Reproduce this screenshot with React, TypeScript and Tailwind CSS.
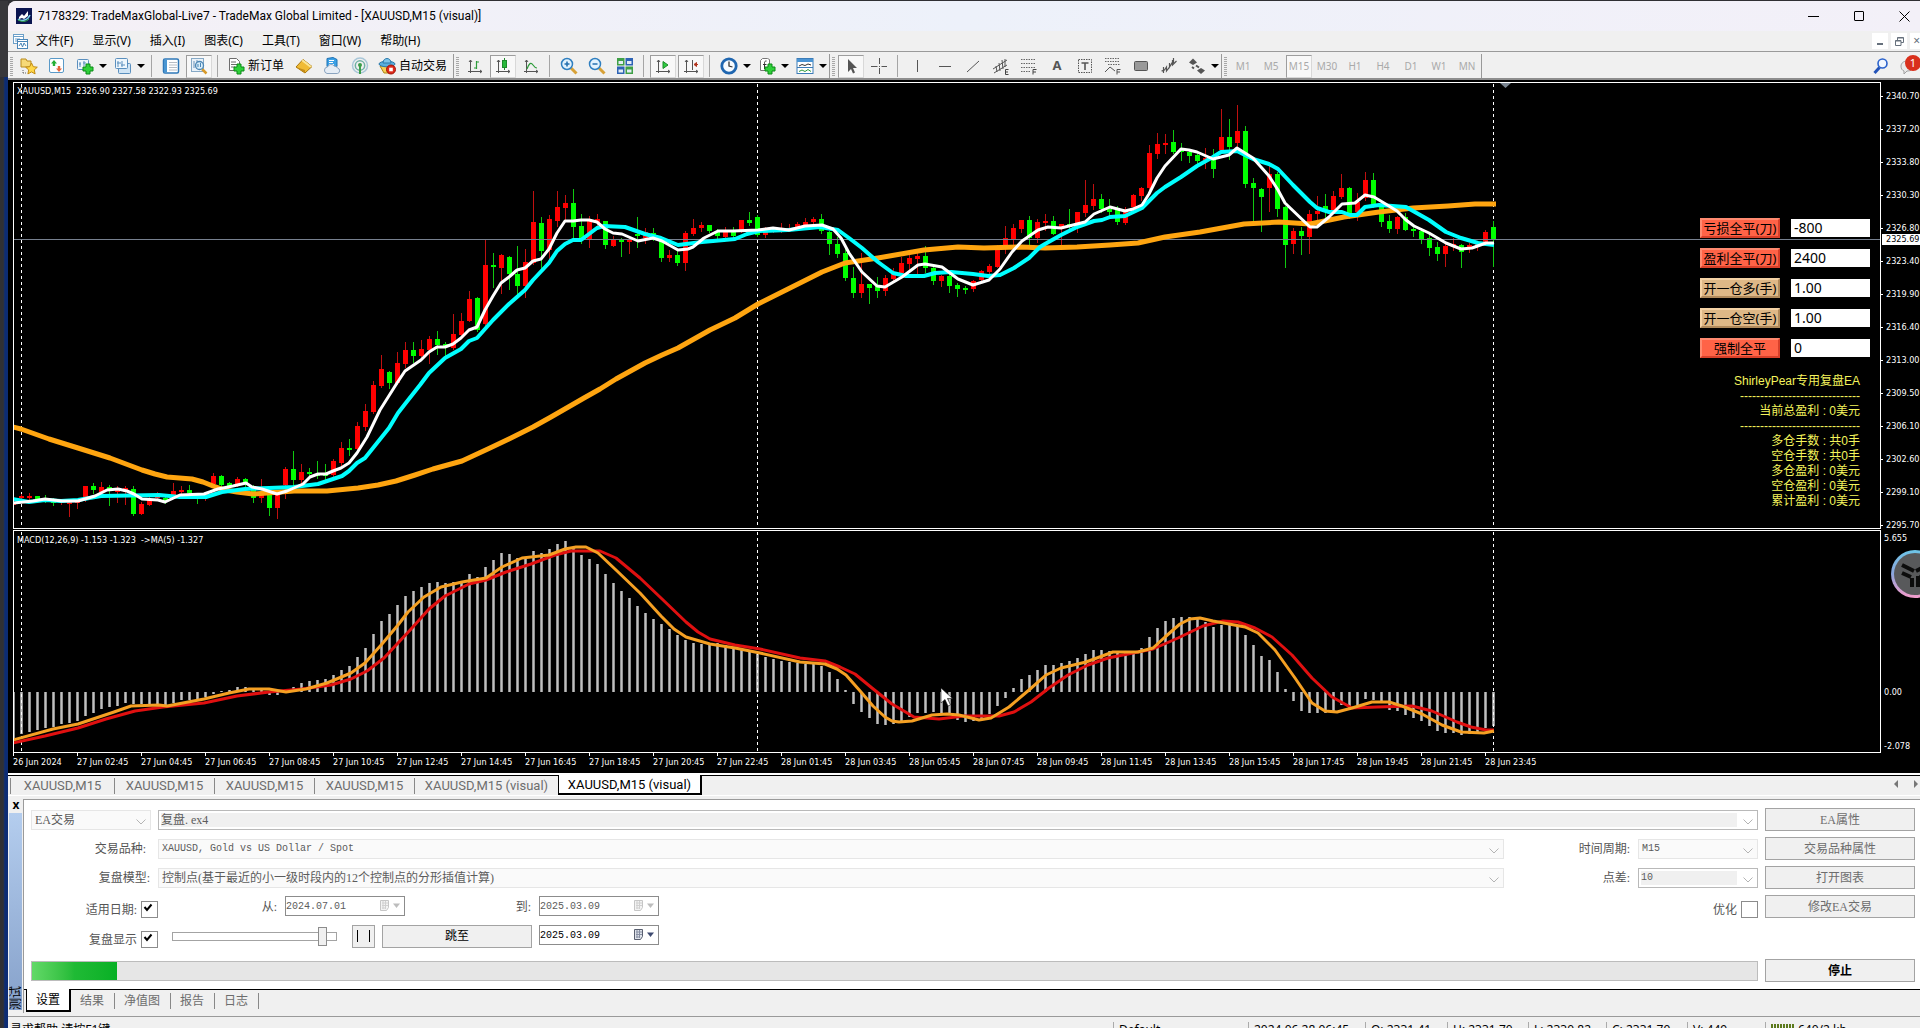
import type { ReactNode } from "react";
import clsx from "clsx";

const UI = "font-['Noto_Sans','Noto_Sans_CJK_SC',sans-serif]";
const SONG = "font-['Liberation_Serif','Noto_Sans_CJK_SC',serif]";
const MONO = "font-['Liberation_Mono','Noto_Sans_CJK_SC',monospace]";
const SMALL = "font-['DejaVu_Sans_Condensed','Noto_Sans',sans-serif]";

// first bar x, distance between bars
const X0 = 13;
const STEP = 8;

type Candle = [high: number, top: number, bottom: number, low: number, up: 0 | 1];

const CANDLES: Candle[] = [
  [501, 502, 505, 510, 1], [494, 496, 498, 499, 1], [493, 496, 497, 499, 1], [496, 496, 499, 500, 0],
  [495, 498, 500, 502, 0], [498, 500, 503, 505, 0], [499, 500, 502, 504, 1], [499, 502, 504, 516, 1],
  [500, 501, 503, 508, 1], [486, 486, 500, 501, 1], [483, 486, 490, 493, 0], [482, 487, 492, 495, 1],
  [485, 487, 491, 505, 0], [486, 488, 492, 502, 1], [486, 488, 492, 504, 1], [486, 489, 514, 515, 0],
  [502, 504, 514, 514, 1], [497, 500, 505, 505, 1], [492, 495, 498, 500, 1], [496, 498, 501, 503, 0],
  [483, 491, 495, 497, 1], [486, 490, 492, 495, 1], [485, 490, 493, 495, 0], [493, 495, 498, 503, 0],
  [492, 494, 498, 500, 1], [473, 476, 484, 486, 1], [475, 476, 485, 487, 0], [482, 483, 486, 487, 0],
  [477, 479, 484, 486, 1], [478, 479, 484, 486, 0], [485, 486, 498, 502, 0], [479, 495, 498, 502, 1],
  [495, 495, 508, 515, 0], [493, 495, 508, 518, 1], [467, 469, 485, 498, 1], [451, 469, 480, 488, 0],
  [464, 472, 480, 484, 1], [468, 472, 473, 477, 0], [461, 474, 476, 478, 0], [464, 474, 476, 480, 0],
  [459, 461, 475, 477, 1], [442, 448, 463, 465, 1], [439, 448, 450, 455, 0], [422, 426, 449, 450, 1],
  [404, 411, 427, 430, 1], [381, 385, 412, 413, 1], [355, 369, 386, 387, 1], [371, 372, 383, 388, 0],
  [352, 363, 383, 384, 1], [342, 350, 364, 367, 1], [342, 350, 356, 362, 0], [340, 349, 356, 357, 1],
  [336, 339, 350, 363, 1], [331, 339, 345, 354, 0], [342, 344, 345, 357, 0], [314, 334, 348, 349, 1],
  [313, 321, 335, 335, 1], [291, 299, 321, 321, 1], [297, 298, 330, 331, 0], [240, 265, 324, 325, 1],
  [253, 265, 267, 287, 0], [254, 255, 268, 293, 1], [256, 257, 274, 289, 0], [246, 274, 286, 294, 0],
  [249, 262, 286, 297, 1], [191, 222, 263, 264, 1], [217, 223, 251, 268, 0], [215, 219, 250, 259, 1],
  [191, 207, 221, 226, 1], [195, 203, 208, 220, 1], [189, 203, 227, 240, 0], [214, 226, 238, 243, 0],
  [216, 221, 240, 247, 1], [214, 219, 223, 227, 1], [221, 221, 245, 248, 0], [236, 239, 246, 246, 1],
  [238, 239, 242, 256, 0], [238, 239, 242, 253, 1], [217, 234, 236, 247, 0], [228, 232, 238, 243, 1],
  [228, 233, 238, 240, 0], [238, 239, 258, 261, 0], [250, 255, 258, 261, 1], [251, 255, 263, 265, 0],
  [231, 233, 263, 270, 1], [219, 228, 234, 235, 1], [222, 225, 228, 231, 1], [225, 225, 231, 232, 0],
  [229, 231, 236, 238, 0], [227, 232, 237, 240, 1], [227, 232, 236, 238, 0], [220, 220, 230, 232, 1],
  [212, 220, 223, 225, 0], [215, 217, 235, 236, 0], [227, 230, 235, 237, 1], [227, 229, 231, 232, 1],
  [223, 228, 230, 232, 1], [224, 228, 230, 231, 1], [222, 224, 227, 229, 1], [218, 222, 225, 227, 1],
  [217, 219, 222, 224, 1], [214, 219, 231, 233, 0], [231, 232, 244, 254, 0], [237, 244, 254, 257, 0],
  [247, 253, 278, 280, 0], [267, 278, 293, 297, 0], [253, 284, 293, 297, 1], [284, 284, 288, 303, 0],
  [277, 286, 291, 297, 0], [275, 278, 291, 295, 1], [268, 274, 279, 280, 1], [257, 263, 273, 274, 1],
  [253, 258, 264, 270, 1], [252, 256, 259, 273, 1], [246, 256, 268, 272, 0], [266, 268, 281, 284, 0],
  [275, 276, 281, 286, 1], [274, 276, 286, 292, 0], [283, 285, 289, 296, 0], [286, 288, 289, 293, 0],
  [280, 281, 289, 291, 1], [270, 271, 280, 282, 1], [264, 266, 272, 273, 1], [245, 247, 267, 267, 1],
  [226, 238, 247, 253, 1], [224, 228, 240, 244, 1], [220, 220, 229, 232, 1], [216, 220, 238, 244, 0],
  [219, 222, 238, 242, 1], [214, 221, 223, 230, 1], [216, 221, 234, 234, 0], [224, 224, 227, 246, 1],
  [209, 224, 227, 228, 0], [212, 212, 224, 232, 1], [180, 205, 213, 216, 1], [184, 199, 206, 209, 1],
  [194, 199, 209, 212, 0], [199, 209, 212, 215, 0], [206, 210, 222, 224, 0], [207, 209, 223, 224, 1],
  [194, 195, 207, 209, 1], [187, 188, 196, 200, 1], [145, 153, 188, 190, 1], [133, 144, 154, 158, 1],
  [134, 143, 145, 153, 1], [130, 142, 152, 153, 0], [143, 149, 152, 160, 0], [151, 152, 156, 162, 0],
  [153, 155, 161, 163, 0], [148, 158, 160, 168, 1], [149, 159, 169, 177, 0], [109, 137, 150, 151, 1],
  [119, 137, 147, 159, 0], [105, 131, 143, 147, 1], [126, 131, 184, 187, 0], [178, 183, 188, 222, 0],
  [188, 189, 197, 231, 0], [166, 174, 188, 211, 1], [172, 174, 209, 216, 0], [206, 207, 245, 267, 0],
  [228, 231, 244, 253, 1], [227, 231, 236, 254, 0], [210, 214, 237, 253, 1], [196, 211, 214, 220, 1],
  [194, 206, 212, 217, 0], [191, 196, 212, 212, 1], [174, 188, 197, 198, 1], [187, 188, 215, 218, 0],
  [193, 202, 212, 220, 1], [172, 180, 198, 200, 1], [173, 180, 204, 207, 0], [205, 207, 222, 226, 0],
  [215, 221, 229, 232, 0], [216, 217, 229, 233, 1], [213, 217, 230, 230, 0], [225, 229, 231, 236, 0],
  [229, 231, 240, 243, 0], [233, 238, 248, 255, 0], [242, 247, 254, 260, 0], [243, 246, 254, 266, 1],
  [238, 244, 247, 250, 1], [244, 245, 252, 267, 0], [243, 245, 247, 252, 1], [242, 244, 246, 250, 1],
  [230, 232, 242, 245, 1], [221, 227, 240, 266, 0],
];

const MACD = [
  741, 734, 732, 730, 728, 727, 724, 723, 721, 716, 713, 709, 707, 706, 703, 704, 704, 705, 706, 706,
  703, 700, 700, 700, 697, 694, 691, 690, 687, 687, 690, 690, 695, 695, 690, 687, 683, 681, 680, 679,
  675, 670, 666, 657, 648, 634, 621, 614, 605, 596, 591, 587, 583, 582, 583, 582, 581, 574, 577, 567,
  560, 553, 554, 558, 557, 551, 553, 549, 544, 541, 548, 555, 559, 564, 574, 583, 591, 598, 606, 613,
  619, 624, 629, 635, 640, 643, 644, 644, 643, 645, 647, 648, 651, 654, 657, 659, 661, 662, 663, 664,
  664, 666, 672, 679, 690, 704, 712, 718, 724, 725, 724, 721, 717, 713, 713, 712, 713, 714, 720, 722,
  721, 720, 714, 706, 698, 688, 679, 675, 670, 665, 665, 663, 661, 658, 654, 650, 650, 651, 651, 652,
  652, 648, 637, 628, 621, 618, 617, 617, 617, 622, 627, 625, 624, 626, 635, 645, 656, 660, 672, 689,
  701, 711, 713, 713, 713, 712, 705, 708, 705, 699, 700, 703, 710, 711, 715, 718, 721, 726, 731, 733,
  733, 735, 734, 733, 728, 726,
];
const MACD_ZERO = 692;

const MA_FAST =
  "13,503 33,501 45,499 62,501 78,501 95,496 107,490 118,489 127,491 134,494 142,499 158,500 165,502 180,495 204,494 218,489 233,486 246,483 252,487 262,489 277,494 287,491 303,484 310,477 318,474 326,474 333,471 341,468 349,463 357,453 367,437 380,410 397,383 405,371 421,360 429,352 437,347 445,347 453,344 461,338 469,330 477,327 485,310 493,296 501,283 509,277 517,270 525,268 533,261 541,259 549,249 557,233 565,221 573,221 581,220 589,220 597,222 605,229 613,233 622,234 638,241 653,238 662,241 678,250 688,249 693,247 704,238 718,231 733,231 758,230 773,228 789,230 805,226 822,225 833,229 841,238 849,253 862,272 877,286 885,287 902,277 918,265 925,264 942,267 958,279 973,285 989,280 1000,269 1012,252 1022,241 1038,230 1048,227 1061,228 1085,222 1094,214 1110,207 1125,211 1133,209 1142,205 1149,194 1157,178 1165,166 1181,149 1189,150 1197,152 1213,159 1229,155 1237,148 1253,158 1269,176 1278,190 1285,203 1310,227 1317,227 1329,217 1342,204 1355,203 1365,195 1374,197 1389,206 1397,211 1406,220 1414,226 1429,233 1446,243 1461,249 1472,248 1486,243 1494,243";
const MA_MID =
  "13,499 29,502 45,500 61,501 78,500 101,496 159,495 180,497 206,497 222,492 245,489 269,488 294,487 318,484 333,479 342,476 349,471 357,463 365,458 373,448 389,428 398,413 405,404 420,385 429,373 445,358 461,349 469,341 477,338 493,320 509,304 517,297 525,290 533,280 549,263 557,251 565,244 573,240 581,240 597,228 604,226 625,227 645,234 661,238 678,245 702,242 735,239 747,234 759,231 788,230 820,227 838,230 849,238 862,248 878,262 893,273 906,276 924,276 935,273 951,272 973,274 988,276 1000,275 1014,268 1029,258 1040,247 1045,244 1061,235 1077,227 1094,221 1102,220 1110,217 1125,216 1142,208 1157,193 1165,187 1181,177 1197,166 1213,157 1221,152 1237,151 1253,159 1269,164 1278,169 1293,185 1310,202 1317,208 1329,212 1342,212 1350,215 1357,215 1365,207 1379,205 1406,207 1429,220 1446,232 1461,238 1478,243 1494,245";
const MA_SLOW =
  "13,427 21,429 49,439 78,448 110,458 142,470 155,474 167,477 192,479 203,482 213,486 225,490 237,492 253,494 294,491 327,491 358,488 378,485 396,481 415,475 433,469 462,461 490,448 511,438 533,427 551,417 584,398 600,389 616,379 645,363 662,355 678,348 710,330 735,318 758,304 788,289 822,272 845,263 878,258 924,250 958,247 984,248 1021,247 1045,248 1077,247 1110,245 1138,243 1165,237 1200,232 1244,224 1279,222 1310,224 1344,217 1379,212 1413,208 1448,206 1475,204 1496,204";
const SIGNAL_FAST =
  "13,740 53,729 78,724 96,718 114,712 131,706 159,705 167,706 204,699 229,693 249,689 269,689 286,692 306,689 327,683 351,673 365,663 382,644 398,625 408,612 424,597 441,587 462,582 486,578 502,567 522,558 549,555 565,549 576,547 586,547 598,553 616,570 640,593 661,616 674,629 686,637 710,644 735,648 760,653 800,662 825,664 837,669 846,675 861,692 873,706 885,717 892,721 899,722 912,721 932,715 947,714 959,715 979,720 991,718 1009,707 1029,690 1046,675 1061,668 1086,662 1113,652 1138,652 1153,648 1165,637 1180,624 1190,619 1200,618 1213,621 1245,627 1258,633 1275,650 1295,678 1312,703 1325,711 1337,712 1352,708 1372,702 1389,702 1402,706 1422,714 1442,725 1461,732 1484,733 1494,731";
const SIGNAL_SLOW =
  "13,743 45,736 78,728 106,719 135,711 163,707 204,703 237,696 269,692 302,689 331,685 351,679 367,671 384,658 398,643 412,628 429,609 445,596 469,584 486,580 506,572 531,564 555,555 571,551 600,551 616,558 640,578 661,598 686,622 698,632 710,639 735,645 760,649 800,658 825,661 840,667 855,674 872,688 892,704 914,717 939,719 964,716 999,716 1014,712 1031,702 1049,688 1068,675 1088,665 1108,658 1153,649 1178,638 1203,626 1223,621 1238,622 1255,628 1272,637 1292,655 1312,678 1332,697 1352,708 1377,707 1412,706 1432,711 1457,722 1471,727 1486,730 1494,730";

const PRICES = [
  "2340.70", "2337.20", "2333.80", "2330.30", "2326.80", "2323.40", "2319.90",
  "2316.40", "2313.00", "2309.50", "2306.10", "2302.60", "2299.10", "2295.70",
];

const TIMES = [
  "26 Jun 2024", "27 Jun 02:45", "27 Jun 04:45", "27 Jun 06:45", "27 Jun 08:45", "27 Jun 10:45",
  "27 Jun 12:45", "27 Jun 14:45", "27 Jun 16:45", "27 Jun 18:45", "27 Jun 20:45", "27 Jun 22:45",
  "28 Jun 01:45", "28 Jun 03:45", "28 Jun 05:45", "28 Jun 07:45", "28 Jun 09:45", "28 Jun 11:45",
  "28 Jun 13:45", "28 Jun 15:45", "28 Jun 17:45", "28 Jun 19:45", "28 Jun 21:45", "28 Jun 23:45",
];

/* ---------- icons ---------- */

function Svg({ children, size = 18 }: { children: ReactNode; size?: number }) {
  return (
    <svg width={size} height={size} viewBox="0 0 18 18" fill="none" className="shrink-0">
      {children}
    </svg>
  );
}

const Plus = () => (
  <path d="M10 7h4v3h3v4h-3v3h-4v-3H7v-4h3z" fill="#2fd03a" stroke="#0a8a17" />
);

const Axes = () => (
  <path d="M4.500 3v13M2 14.500h14M3 5l1.500-2L6 5M14 13l2 1.500-2 1.500" stroke="#555" />
);

const FavIcon = () => (
  <Svg>
    <path d="M1 2h5l1 2h4v6H1z" fill="#f6d978" stroke="#b98b1c" />
    <path d="M3 13v3M3 16h3" stroke="#666" strokeDasharray="1 1" />
    <path d="M11.500 6l1.800 3.700 4 .5-3 2.700.8 4-3.600-2-3.600 2 .8-4-3-2.700 4-.5z" fill="#ffd84a" stroke="#c08a10" />
  </Svg>
);
const MarketIcon = () => (
  <Svg>
    <rect x="1.500" y="1.500" width="14" height="14" rx="1.500" fill="#fff" stroke="#5a9ac8" />
    <path d="M6 3l3 3.500H7.200V9H4.800V6.500H3z" fill="#25b035" />
    <path d="M11 15l-3-3.500h1.800V9h2.400v2.500H14z" fill="#e8663a" />
  </Svg>
);
const NewChartIcon = () => (
  <Svg>
    <rect x="1.500" y="2.500" width="11" height="10" rx="1" fill="#eef6fc" stroke="#5a8fbe" />
    <path d="M4 5v5M8 4v5M3 7h2M7 6h3" stroke="#5a8fbe" />
    <Plus />
  </Svg>
);
const ProfilesIcon = () => (
  <Svg>
    <rect x="4.500" y="6.500" width="12" height="10" rx="1" fill="#cfe4f5" stroke="#5a8fbe" />
    <rect x="1.500" y="1.500" width="12" height="10" rx="1" fill="#eef6fc" stroke="#5a8fbe" />
    <path d="M4 4v6M8 4v6M3 6h4M7 8h4" stroke="#5a8fbe" />
  </Svg>
);
const WatchIcon = () => (
  <Svg>
    <rect x="1.500" y="2" width="15" height="14" rx="1.500" fill="#fff" stroke="#2f78b8" strokeWidth="1.500" />
    <path d="M2 2.500h3v13H2z" fill="#4a96d2" />
    <path d="M7 5.500h8M7 8h8M7 10.500h8M7 13h8" stroke="#b6bcc4" />
  </Svg>
);
const TesterIcon = () => (
  <Svg>
    <rect x="1.500" y="1.500" width="12" height="13" fill="#eaf2f9" stroke="#86a9c6" />
    <path d="M4 4v7M7 3v8" stroke="#6a93b8" />
    <path d="M12 12l4.500 4.500" stroke="#d79a2b" strokeWidth="2.500" />
    <circle cx="9.500" cy="8.500" r="4" fill="#d5ecfb" fillOpacity=".8" stroke="#4d87b5" strokeWidth="1.300" />
    <path d="M8 7v3M10.500 6v4" stroke="#4d87b5" />
  </Svg>
);
const OrderIcon = () => (
  <Svg>
    <path d="M2.500 1.500h7l3 3v9h-10z" fill="#fff" stroke="#6d6d6d" />
    <path d="M4 5h5M4 7.500h6M4 10h4" stroke="#6d6d6d" />
    <Plus />
  </Svg>
);
const GoldIcon = () => (
  <Svg>
    <path d="M1 10l7-7.500 9 7L10 16z" fill="#f0bb35" stroke="#a8770f" />
    <path d="M8 2.500l9 7-2 1-8.500-6.500z" fill="#fbe596" />
    <path d="M1 10l9 3v3z" fill="#c48c18" />
  </Svg>
);
const CloudIcon = () => (
  <Svg>
    <path d="M4 1.500l6-1 4 2v7H4z" fill="#3ba1e6" stroke="#1f72b3" />
    <path d="M6 3.500h5M6 5.500h4M6 7.500h5" stroke="#fff" />
    <path d="M4 16.500a3.300 3.300 0 0 1 .5-6.500 4 4 0 0 1 7-.8 3.200 3.200 0 0 1 3 1.800 2.800 2.800 0 0 1-.3 5.500z" fill="#e6edf5" stroke="#8ba4bf" />
  </Svg>
);
const SignalIcon = () => (
  <Svg>
    <circle cx="9" cy="8.500" r="7.500" stroke="#a9c7d8" strokeWidth="1.500" />
    <circle cx="9" cy="8.500" r="4.700" stroke="#6fb0a4" strokeWidth="1.500" />
    <circle cx="9" cy="8" r="2" fill="#3c9e4a" />
    <path d="M9 8v9" stroke="#3c9e4a" strokeWidth="2" />
  </Svg>
);
const AutoIcon = () => (
  <Svg>
    <path d="M2 9h14l-4 7H6z" fill="#f4cf55" stroke="#ad8417" />
    <ellipse cx="9" cy="7" rx="8" ry="2.800" fill="#58aede" stroke="#2b78a8" />
    <path d="M5 6c0-6 8-6 8 0z" fill="#7cc4ea" stroke="#2b78a8" />
    <circle cx="13" cy="12.500" r="4.500" fill="#dd2a1b" stroke="#a01408" />
    <rect x="11.200" y="10.700" width="3.600" height="3.600" fill="#fff" />
  </Svg>
);
const BarsIcon = () => (
  <Svg>
    <Axes />
    <path d="M10.500 4v8M8 11h2.500M10.500 5H13" stroke="#2d9c3a" strokeWidth="1.200" />
  </Svg>
);
const CandlesIcon = () => (
  <Svg>
    <Axes />
    <path d="M10.500 1v12" stroke="#1d8b2a" />
    <rect x="8.500" y="3.500" width="4" height="7" fill="#27b93b" stroke="#1d8b2a" />
  </Svg>
);
const LineIcon = () => (
  <Svg>
    <Axes />
    <path d="M5 12c2-6 4-7 6-4s3 3 4 3" stroke="#2d9c3a" strokeWidth="1.200" />
  </Svg>
);
const Lens = ({ minus }: { minus?: boolean }) => (
  <Svg>
    <path d="M11 11l5.500 5.500" stroke="#d7a137" strokeWidth="3" />
    <circle cx="7" cy="7" r="5.500" fill="#e2f2fd" stroke="#2f7fc0" strokeWidth="1.500" />
    <path d={minus ? "M4.500 7h5" : "M4.500 7h5M7 4.500v5"} stroke="#2570b0" strokeWidth="1.600" />
  </Svg>
);
const TileIcon = () => (
  <Svg>
    <path d="M1 1h7.500v7.500H1z" fill="#3fa047" />
    <path d="M9.500 1H17v7.500H9.500z" fill="#2d63b5" />
    <path d="M1 9.500h7.500V17H1z" fill="#2d63b5" />
    <path d="M9.500 9.500H17V17H9.500z" fill="#3fa047" />
    <path d="M2.500 4h4.500v3H2.500zM11 4h4.500v3H11zM2.500 12.500h4.500v3H2.500zM11 12.500h4.500v3H11z" fill="#e4edf6" />
  </Svg>
);
const ScrollIcon = () => (
  <Svg>
    <Axes />
    <path d="M9 4.500l5 3.500-5 3.500z" fill="#2ecc40" stroke="#1d8b2a" />
  </Svg>
);
const ShiftIcon = () => (
  <Svg>
    <Axes />
    <path d="M10.500 3v10" stroke="#555" />
    <path d="M16 7.500h-3M12 7.500l2.500-2v4z" stroke="#b3341e" fill="#b3341e" />
  </Svg>
);
const ClockIcon = () => (
  <Svg>
    <circle cx="9" cy="9" r="7.200" fill="#f6fbff" stroke="#1f66b0" strokeWidth="2.800" />
    <path d="M9 4.500V9l3.500 1" stroke="#333" strokeWidth="1.300" />
  </Svg>
);
const IndicatorIcon = () => (
  <Svg>
    <path d="M2.500 3.500v10h9v-11l-2-1h-5z" fill="#fff" stroke="#777" />
    <path d="M8.500 4c-2 0-2 1-2 2.500V12M5 7.500h3.500" stroke="#333" />
    <Plus />
  </Svg>
);
const TemplateIcon = () => (
  <Svg>
    <rect x="1" y="1.500" width="16" height="15" fill="#fff" stroke="#3b7cb8" />
    <path d="M1 2h16v3H1z" fill="#4a94d4" />
    <path d="M3 9l3-1.500 3 1 3-1.500 3 1" stroke="#333" />
    <path d="M1 10.500h16" stroke="#3b7cb8" />
    <path d="M3 14.500l3-1.500 3 1.500 3-2 3 2" stroke="#2d9c3a" />
  </Svg>
);
const PointerIcon = () => (
  <Svg>
    <path d="M6 2v13l3-3 2 4.500 2-1L11 11h4z" fill="#555" />
  </Svg>
);
const CrossIcon = () => (
  <Svg>
    <path d="M9.500 1v6M9.500 11v6M1 9.500h6.500M11.500 9.500H17M9 9.500h1" stroke="#555" />
  </Svg>
);
const VLineIcon = () => <Svg><path d="M9.500 3v12" stroke="#555" /></Svg>;
const HLineIcon = () => <Svg><path d="M3 9.500h12" stroke="#555" /></Svg>;
const TrendIcon = () => <Svg><path d="M3 15L15 4" stroke="#555" /></Svg>;
const ChannelIcon = () => (
  <Svg>
    <path d="M1 12L15 3M2 16L15 8M4 9l1 6M7 6l1 8M10 3l1 9M13 2v8" stroke="#555" />
    <path d="M16.500 12.500h-3v5h3M13.500 15h2.500" stroke="#444" />
  </Svg>
);
const FiboIcon = () => (
  <Svg>
    <path d="M1 2.500h15M1 6.500h15M1 10.500h15M1 14.500h9" stroke="#666" strokeDasharray="1.500 1" />
    <path d="M16.500 12.500h-3.500v5M13 15h3" stroke="#444" />
  </Svg>
);
const LabelIcon = () => (
  <Svg>
    <rect x="2.500" y="2.500" width="13" height="13" stroke="#555" strokeDasharray="1.500 1" />
    <path d="M5.500 6h7M9 6v7" stroke="#555" strokeWidth="1.600" />
  </Svg>
);
const FanIcon = () => (
  <Svg>
    <path d="M1 1.500h15M1 4.500h15M4 7.500h12" stroke="#666" strokeDasharray="1.500 1" />
    <path d="M1 15l5-5 5 4M16.500 12.500h-3.500v5M13 15h3" stroke="#555" />
  </Svg>
);
const RectIcon = () => <Svg><rect x="2.500" y="4.500" width="13" height="9" rx="1" fill="#999" stroke="#555" /></Svg>;
const WavesIcon = () => (
  <Svg>
    <path d="M3.500 10v6M1.500 14l3-1 2-3v4l3-4V6v4l3-5V3v5l4-4M13.500 1v5" stroke="#555" strokeWidth="1.200" />
  </Svg>
);
const ArrowsIcon = () => (
  <Svg>
    <path d="M1 5.500L5 1.500l4 4-4 2.500z" fill="#555" />
    <path d="M4 10l2 1.500M8 8.500l3 2" stroke="#555" strokeWidth="2" />
    <path d="M9 13.500l4-2.500 4 2.500-4 3.500z" fill="#555" />
  </Svg>
);
const SearchIcon = () => (
  <Svg>
    <path d="M7.500 10.500L2.500 16" stroke="#2353b8" strokeWidth="3" />
    <circle cx="10.500" cy="6.500" r="4.500" fill="#f2f7ff" stroke="#2b62cc" strokeWidth="1.600" />
  </Svg>
);

const Calendar = ({ dim }: { dim?: boolean }) => (
  <svg width="22" height="13" viewBox="0 0 22 13" fill="none">
    <path d="M1.500 1.500h8v7l-2 3h-6z" fill={dim ? "#f3f3f3" : "#dfe3ea"} stroke={dim ? "#c6c6c6" : "#5a6070"} />
    <path d="M3 4h6M3 6.500h6M3 9h4M4 2v8M6.500 2v8" stroke={dim ? "#d0d0d0" : "#8890a4"} />
    <path d="M14 4.500h7L17.500 9z" fill={dim ? "#bdbdbd" : "#3e4a70"} />
  </svg>
);

const Chevron = () => (
  <svg width="10" height="6" viewBox="0 0 10 6" fill="none" className="pointer-events-none absolute right-1 top-2">
    <path d="M.5.500L5 5 9.500.500" stroke="#b4b4b4" />
  </svg>
);

/* ---------- toolbar ---------- */

interface ToolProps {
  name: string;
  icon?: ReactNode;
  text?: string;
  pressed?: boolean;
  menu?: boolean;
}

function Tool({ name, icon, text, pressed, menu }: ToolProps) {
  return (
    <button type="button" aria-label={name} className="flex h-[24px] shrink-0 items-center">
      <span
        className={clsx(
          "flex h-[23px] items-center justify-center",
          text ? "w-[25px]" : "mx-px w-[26px]",
          pressed && "border border-[#d8d8d8] border-l-[#9d9d9d] border-t-[#9d9d9d] bg-[#f8f8f8]",
        )}
      >
        {icon}
      </span>
      {text && <span className="mr-1.5 text-[12px] leading-4 text-black">{text}</span>}
      {menu && <span className="mr-0.5 size-0 border-x-4 border-t-4 border-x-transparent border-t-black" />}
    </button>
  );
}

const Sep = () => <span className="mr-[5px] ml-1 h-[22px] w-px shrink-0 bg-[#a5a5a5]" />;
const End = () => <span className="h-[24px] w-px shrink-0 bg-[#999]" />;
const Grip = () => (
  <span className="mx-0.5 h-[19px] w-[3px] shrink-0 bg-[repeating-linear-gradient(#a8a8a8_0_1px,#f0f0f0_1px_2px)]" />
);

const FRAMES = ["M1", "M5", "M15", "M30", "H1", "H4", "D1", "W1", "MN"];

function Toolbar() {
  return (
    <div className="flex h-[28px] items-center border-b-2 border-[#8e8e8e] bg-[#f0f0f0] pt-0.5">
      <Grip />
      <Tool name="收藏" icon={<FavIcon />} />
      <Tool name="市场报价" icon={<MarketIcon />} />
      <Tool name="新图表" icon={<NewChartIcon />} menu />
      <Tool name="配置文件" icon={<ProfilesIcon />} menu />
      <Sep />
      <Tool name="数据窗口" icon={<WatchIcon />} />
      <Tool name="策略测试" icon={<TesterIcon />} pressed />
      <Sep />
      <Tool name="新订单" icon={<OrderIcon />} text="新订单" />
      <Tool name="MetaEditor" icon={<GoldIcon />} />
      <Tool name="云" icon={<CloudIcon />} />
      <Tool name="信号" icon={<SignalIcon />} />
      <Tool name="自动交易" icon={<AutoIcon />} text="自动交易" />
      <End />
      <Grip />
      <Tool name="柱状图" icon={<BarsIcon />} />
      <Tool name="阴阳烛" icon={<CandlesIcon />} pressed />
      <Tool name="折线图" icon={<LineIcon />} />
      <Sep />
      <Tool name="放大" icon={<Lens />} />
      <Tool name="缩小" icon={<Lens minus />} />
      <Tool name="平铺" icon={<TileIcon />} />
      <Sep />
      <Tool name="自动滚动" icon={<ScrollIcon />} pressed />
      <Tool name="图表平移" icon={<ShiftIcon />} pressed />
      <Sep />
      <Tool name="周期" icon={<ClockIcon />} menu />
      <Tool name="指标" icon={<IndicatorIcon />} menu />
      <Tool name="模板" icon={<TemplateIcon />} menu />
      <End />
      <Grip />
      <Tool name="光标" icon={<PointerIcon />} pressed />
      <Tool name="十字准线" icon={<CrossIcon />} />
      <Sep />
      <Tool name="垂直线" icon={<VLineIcon />} />
      <Tool name="水平线" icon={<HLineIcon />} />
      <Tool name="趋势线" icon={<TrendIcon />} />
      <Tool name="通道" icon={<ChannelIcon />} />
      <Tool name="斐波那契" icon={<FiboIcon />} />
      <Tool name="文字" icon={<span className="text-[13px] font-bold text-[#555]">A</span>} />
      <Tool name="标签" icon={<LabelIcon />} />
      <Tool name="扇形" icon={<FanIcon />} />
      <Tool name="矩形" icon={<RectIcon />} />
      <Tool name="波浪" icon={<WavesIcon />} />
      <Tool name="箭头" icon={<ArrowsIcon />} menu />
      <End />
      <Grip />
      {FRAMES.map((f) => (
        <Tool
          key={f}
          name={f}
          pressed={f === "M15"}
          icon={<span className="text-[10px] text-[#a9a9a9]">{f}</span>}
        />
      ))}
      <End />
      <div className="relative ml-auto flex items-center gap-2">
        <button type="button" aria-label="搜索"><SearchIcon /></button>
        <button type="button" aria-label="通知" className="w-[22px]">
          <svg width="18" height="18" viewBox="0 0 18 18" fill="none">
            <path d="M3 9c0-3 3-5 6-5h5v8c-1 2-4 2-5 2l-3 3v-3c-2-1-3-2-3-5z" fill="#e9e9e9" stroke="#a0a0a0" />
          </svg>
        </button>
        <span className="absolute -top-0.5 left-[33px] flex size-4 items-center justify-center rounded-full bg-[#d9301c] text-[11px] leading-4 text-white">
          1
        </span>
      </div>
    </div>
  );
}

/* ---------- chart ---------- */

function DayLines({ y1, y2 }: { y1: number; y2: number }) {
  return (
    <>
      {[1, 93, 185].map((i) => (
        <line
          key={i}
          x1={X0 + STEP * i + 0.5}
          x2={X0 + STEP * i + 0.5}
          y1={y1}
          y2={y2}
          stroke="#fff"
          strokeDasharray="3 3"
        />
      ))}
    </>
  );
}

const line = { fill: "none", strokeLinejoin: "round" as const };

function PricePlot() {
  return (
    <svg className="block h-full w-full">
      <g transform="translate(-14 -83)">
        <DayLines y1={84} y2={528} />
        <g shapeRendering="crispEdges">
          {CANDLES.map(([high, top, bottom, low, up], i) => {
            const x = X0 + STEP * i;
            return (
              <g key={i} fill={up ? "#f00" : "#0f0"}>
                <rect x={x} y={high} width={1} height={low - high + 1} fill={up ? "#c01010" : "#10c810"} />
                <rect x={x - 2} y={top} width={5} height={Math.max(bottom - top, 2)} />
              </g>
            );
          })}
        </g>
        <rect x={14} y={239} width={4000} height={1} fill="#77808f" />
        <polyline points={MA_SLOW} stroke="#ffa510" strokeWidth={5} {...line} />
        <polyline points={MA_MID} stroke="#0ff" strokeWidth={4} {...line} />
        <polyline points={MA_FAST} stroke="#fff" strokeWidth={3} {...line} />
        <path d="M1500 83h11l-5.500 5z" fill="#7a8591" />
      </g>
    </svg>
  );
}

function MacdPlot() {
  return (
    <svg className="block h-full w-full">
      <g transform="translate(-14 -531)">
        <g fill="#c0c0c0">
          {MACD.map((y, i) => (
            <rect
              key={i}
              x={X0 + STEP * i - 0.75}
              y={Math.min(y, MACD_ZERO)}
              width={2.5}
              height={Math.max(Math.abs(y - MACD_ZERO), 1)}
            />
          ))}
        </g>
        <DayLines y1={532} y2={752} />
        <polyline points={SIGNAL_SLOW} stroke="#e01010" strokeWidth={3} {...line} />
        <polyline points={SIGNAL_FAST} stroke="#f5a023" strokeWidth={3} {...line} />
        <path d="M941 688v15l4-3.500 3 6.500 2.500-1-3-6.500h5z" fill="#fff" stroke="#111" strokeWidth=".6" />
      </g>
    </svg>
  );
}

const ORDERS = [
  { id: "loss", label: "亏损全平(刀)", value: "-800", red: true },
  { id: "profit", label: "盈利全平(刀)", value: "2400", red: true },
  { id: "buy", label: "开一仓多(手)", value: "1.00", red: false },
  { id: "sell", label: "开一仓空(手)", value: "1.00", red: false },
  { id: "close", label: "强制全平", value: "0", red: true },
];

const INFO = [
  "ShirleyPear专用复盘EA",
  "------------------------------",
  "当前总盈利 : 0美元",
  "------------------------------",
  "多仓手数 : 共0手",
  "空仓手数 : 共0手",
  "多仓盈利 : 0美元",
  "空仓盈利 : 0美元",
  "累计盈利 : 0美元",
];

function EaPanel() {
  return (
    <div className={clsx("absolute right-[10px] top-[135px] w-[170px]", UI)}>
      <div className="flex flex-col gap-[10px]">
        {ORDERS.map((o) => (
          <div key={o.id} className="flex h-5 items-center justify-between">
            <button
              type="button"
              className={clsx(
                "h-5 w-20 border-2 text-center text-[13px] leading-4 whitespace-nowrap text-black",
                o.red
                  ? "border-[#d8402a] border-l-[#ff8a70] border-t-[#ff8a70] bg-[#ff6347]"
                  : "border-[#b08a5c] border-l-[#f5d3a6] border-t-[#f5d3a6] bg-[#deb887]",
              )}
            >
              {o.label}
            </button>
            <input
              aria-label={o.label}
              defaultValue={o.value}
              className="h-[18px] w-[79px] bg-white pl-[3px] text-[14px] leading-[18px] text-black"
            />
          </div>
        ))}
      </div>
      <div className="mt-4 mr-[10px] text-right font-['Liberation_Sans','Noto_Sans_CJK_SC',sans-serif] text-[12px] leading-[15px] text-[#f4f45c]">
        {INFO.map((t, i) => (
          <p key={i}>{t}</p>
        ))}
      </div>
    </div>
  );
}

function Charts() {
  return (
    <div className={clsx("relative bg-black pt-0.5 pl-[5px] text-[9px] text-white", SMALL)}>
      <div className="flex h-[447px]">
        <div className="relative min-w-0 flex-1 border border-white">
          <PricePlot />
          <p className="absolute top-0.5 left-[3px] leading-3 whitespace-pre">XAUUSD,M15  2326.90 2327.58 2322.93 2325.69</p>
          <EaPanel />
        </div>
        <div className="relative w-[39px] shrink-0">
          {PRICES.map((p) => (
            <div key={p} className="h-[33px]">
              <div className="flex h-[29px] items-center gap-[3px]">
                <i className="h-px w-0.5 bg-white" />
                {p}
              </div>
            </div>
          ))}
          <span className="absolute top-[152px] right-0 left-px bg-white pl-1 leading-[11px] text-black">2325.69</span>
        </div>
      </div>
      <div className="mt-px flex h-[223px]">
        <div className="relative min-w-0 flex-1 border border-white">
          <MacdPlot />
          <p className="absolute top-[3px] left-[3px] leading-3 whitespace-pre">MACD(12,26,9) -1.153 -1.323  -&gt;MA(5) -1.327</p>
        </div>
        <div className="flex w-[39px] shrink-0 flex-col pt-0.5 pl-[3px] leading-3">
          <span>5.655</span>
          <span className="mt-[142px]">0.00</span>
          <span className="mt-[42px]">-2.078</span>
        </div>
      </div>
      <div className="flex h-5 overflow-hidden">
        {TIMES.map((t) => (
          <div key={t} className="w-16 shrink-0 whitespace-nowrap">
            <i className="block h-[3px] w-px bg-white" />
            <span className="block leading-3">{t}</span>
          </div>
        ))}
      </div>
      {/* floating assistant ball */}
      <div className="absolute top-[470px] -right-[19px] size-12 rounded-full bg-linear-to-b from-[#6cc5e8] via-[#8ba4dc] to-[#f59ccc] p-[3px]">
        <div className="flex size-full items-center justify-center rounded-full bg-[#58595b]">
          <svg width="32" height="32" viewBox="0 0 32 32" fill="none" stroke="#0c0c0c" strokeWidth="4">
            <path d="M3 7l12 6M3 15l9 4M29 7l-12 6M29 15l-8 4M13 20v9M19 18v11" />
          </svg>
        </div>
      </div>
    </div>
  );
}

/* ---------- tester ---------- */

interface ComboProps {
  id: string;
  value: string;
  className?: string;
  editable?: boolean;
  mono?: boolean;
}

function Combo({ id, value, className, editable, mono }: ComboProps) {
  return (
    <div
      className={clsx(
        "relative h-5 border bg-[#fafafa]",
        editable ? "border-[#b9b9b9] bg-white p-0.5" : "border-[#e6e6e6]",
        className,
      )}
    >
      <select
        id={id}
        disabled
        aria-label={value}
        className={clsx(
          "block h-full appearance-none text-[#5c5c5c] opacity-100",
          mono ? clsx("text-[10px]", MONO) : "text-[12px]",
          editable ? "w-[calc(100%-18px)] bg-[#f0f0f0] leading-[14px]" : "w-full pl-[3px] leading-[18px]",
        )}
      >
        <option>{value}</option>
      </select>
      <Chevron />
    </div>
  );
}

function DateBox({ id, value, dim }: { id: string; value: string; dim?: boolean }) {
  return (
    <div className="relative mt-px h-5 w-[120px] shrink-0 self-start border border-[#8c8c8c] bg-white">
      <input
        id={id}
        aria-label={value}
        disabled={dim}
        defaultValue={value}
        className={clsx("block h-full w-full text-[10px]", MONO, dim ? "text-[#5c5c5c]" : "text-black")}
      />
      <span className="pointer-events-none absolute top-0.5 right-[3px]">
        <Calendar dim={dim} />
      </span>
    </div>
  );
}

function Tick({ id, checked }: { id: string; checked?: boolean }) {
  return (
    <span className="relative h-[17px] w-[17px] shrink-0 self-end">
      <input id={id} type="checkbox" defaultChecked={checked} className="peer block size-full appearance-none border border-[#8c8c8c] bg-white" />
      <svg viewBox="0 0 17 17" className="pointer-events-none absolute inset-0 hidden peer-checked:block" fill="none">
        <path d="M3.500 6L6 9l4.500-5.500" stroke="#000" strokeWidth="2" />
      </svg>
    </span>
  );
}

const gray = "text-[12px] leading-4 text-[#555] whitespace-nowrap";

function SideButton({ children, strong }: { children: ReactNode; strong?: boolean }) {
  return (
    <button
      type="button"
      className={clsx(
        "h-[23px] w-[150px] shrink-0 border border-[#a3a3a3] bg-[#f0f0f0] text-[12px] leading-4",
        strong ? "font-bold text-black" : "text-[#6d6d6d]",
      )}
    >
      {children}
    </button>
  );
}

// percent of the test already played
const PROGRESS = 4.9;

function TesterForm() {
  return (
    <div className={clsx("bg-white pt-2 pr-[5px] pb-[7px] pl-[7px]", SONG)}>
      <div className="flex gap-[7px]">
        <div className="flex min-w-0 flex-1 flex-col gap-[6px]">
          <div className="flex h-[23px] items-center gap-[7px]">
            <Combo id="kind" value="EA交易" className="w-[120px]" />
            <Combo id="expert" value="复盘. ex4" className="flex-1" editable />
          </div>
          <div className="flex h-[23px] items-center">
            <label htmlFor="symbol" className={clsx(gray, "w-[127px] pr-3 text-right")}>交易品种:</label>
            <Combo id="symbol" value="XAUUSD, Gold vs US Dollar / Spot" className="flex-1" mono />
            <label htmlFor="period" className={clsx(gray, "w-[134px] pr-2 text-right")}>时间周期:</label>
            <Combo id="period" value="M15" className="w-[120px]" mono />
          </div>
          <div className="flex h-[23px] items-center">
            <label htmlFor="model" className={clsx(gray, "w-[127px] pr-2 text-right")}>复盘模型:</label>
            <Combo id="model" value="控制点(基于最近的小一级时段内的12个控制点的分形插值计算)" className="flex-1" />
            <label htmlFor="spread" className={clsx(gray, "w-[134px] pr-2 text-right")}>点差:</label>
            <Combo id="spread" value="10" className="w-[120px]" editable mono />
          </div>
          <div className="flex h-[23px] items-center">
            <label htmlFor="use-date" className={clsx(gray, "w-[110px] self-end pr-1 text-right")}>适用日期:</label>
            <Tick id="use-date" checked />
            <label htmlFor="from" className={clsx(gray, "w-[127px] pr-2 text-right")}>从:</label>
            <DateBox id="from" value="2024.07.01" dim />
            <label htmlFor="to" className={clsx(gray, "w-[134px] pr-2 text-right")}>到:</label>
            <DateBox id="to" value="2025.03.09" dim />
            <label htmlFor="optimize" className={clsx(gray, "ml-auto self-end pr-1")}>优化</label>
            <Tick id="optimize" />
          </div>
          <div className="flex h-[24px] items-center">
            <label htmlFor="visual" className={clsx(gray, "w-[110px] self-end pr-1 text-right")}>复盘显示</label>
            <Tick id="visual" checked />
            <input
              type="range"
              aria-label="速度"
              min={0}
              max={100}
              defaultValue={94}
              className="ml-[14px] h-[9px] w-[165px] appearance-none self-center border border-[#a3a3a3] bg-white [&::-webkit-slider-thumb]:h-[19px] [&::-webkit-slider-thumb]:w-[9px] [&::-webkit-slider-thumb]:appearance-none [&::-webkit-slider-thumb]:border [&::-webkit-slider-thumb]:border-[#8c8c8c] [&::-webkit-slider-thumb]:bg-[#f0f0f0]"
            />
            <button type="button" aria-label="暂停" className="ml-[15px] flex h-[23px] w-[23px] items-center justify-center gap-[11px] border border-[#a3a3a3] bg-[#f0f0f0]">
              <i className="h-3 w-px bg-black" />
              <i className="h-3 w-px bg-black" />
            </button>
            <button type="button" className="mx-[7px] h-[23px] w-[150px] border border-[#a3a3a3] bg-[#f0f0f0] text-[12px] leading-4 text-black">
              跳至
            </button>
            <DateBox id="jump" value="2025.03.09" />
          </div>
        </div>
        <div className="flex flex-col gap-[6px]">
          <SideButton>EA属性</SideButton>
          <SideButton>交易品种属性</SideButton>
          <SideButton>打开图表</SideButton>
          <SideButton>修改EA交易</SideButton>
        </div>
      </div>
      <div className="mt-[11px] flex items-center gap-[7px]">
        <div role="progressbar" aria-valuenow={PROGRESS} className="h-5 flex-1 border border-[#bcbcbc] bg-[#e6e6e6]">
          <div
            className="h-full bg-linear-to-r from-[#62d968] via-[#1fba35] to-[#06b025]"
            style={{ width: `${PROGRESS}%` }}
          />
        </div>
        <SideButton strong>停止</SideButton>
      </div>
    </div>
  );
}

const CHART_TABS = ["XAUUSD,M15", "XAUUSD,M15", "XAUUSD,M15", "XAUUSD,M15", "XAUUSD,M15 (visual)"];
const TESTER_TABS = ["结果", "净值图", "报告", "日志"];
const TAB_WIDTHS = ["w-[104px]", "w-[100px]", "w-[100px]", "w-[100px]", "w-[144px]"];

function ChartTabs() {
  return (
    <div className="border-t-2 border-white">
      <div className="flex h-[21px] items-start border-t border-b border-t-black border-b-white bg-[#f0f0f0] pl-0.5 font-['Roboto',sans-serif] text-[13px] leading-4 text-[#6d6d6d]">
        {CHART_TABS.map((t, i) => (
          <button
            key={i}
            type="button"
            className={clsx("mt-0.5 h-4 shrink-0 border-l border-[#888] text-center whitespace-nowrap", TAB_WIDTHS[i])}
          >
            {t}
          </button>
        ))}
        <button type="button" className="-mt-px h-[20px] w-[144px] shrink-0 border border-t-0 border-r-2 border-b-2 border-black bg-white pt-0.5 whitespace-nowrap text-black">
          XAUUSD,M15 (visual)
        </button>
        <span className="mt-1 mr-0.5 ml-auto flex gap-4">
          <i className="size-0 border-y-4 border-r-4 border-y-transparent border-r-[#777]" />
          <i className="size-0 border-y-4 border-l-4 border-y-transparent border-l-[#777]" />
        </span>
      </div>
    </div>
  );
}

function Tester() {
  return (
    <div className="flex bg-[#f0f0f0]">
      <div className="flex w-[15px] shrink-0 flex-col pb-[3px] pl-px">
        <button type="button" aria-label="关闭" className="h-[17px] text-[12px] leading-4 font-bold text-black">x</button>
        <div className="flex w-[13px] flex-1 items-end bg-linear-to-b from-[#b4cdee] to-[#86a1ca] text-[12px] leading-[13px] text-black">
          <span className="rotate-180 [text-orientation:sideways] [writing-mode:vertical-rl]">测试</span>
        </div>
      </div>
      <div className="mt-[3px] min-w-0 flex-1 border-t border-l border-[#9a9a9a]">
        <TesterForm />
        <div className="flex h-[24px] items-start border-t border-black text-[12px] leading-4 text-[#6d6d6d]">
          <button type="button" className="-mt-px ml-0.5 h-[23px] w-[45px] border border-t-0 border-r-2 border-b-2 border-black bg-white text-black">
            设置
          </button>
          {TESTER_TABS.map((t) => (
            <button key={t} type="button" className="mt-[3px] h-4 border-r border-[#888] pr-[10px] pl-[9px]">
              {t}
            </button>
          ))}
        </div>
      </div>
    </div>
  );
}

function StatusBar() {
  const cell = "shrink-0 border-l border-[#aaa] pl-[5px]";
  return (
    <div className="mt-[3px] flex h-6 shrink-0 border-t border-[#9a9a9a] pt-[5px] text-[12px] leading-4 whitespace-nowrap text-black">
      <span className="flex-1 pl-0.5">寻求帮助,请按F1键</span>
      <span className={clsx(cell, "w-[135px]")}>Default</span>
      <span className={clsx(cell, "w-[117px]")}>2024.06.28 06:45</span>
      <span className={clsx(cell, "w-[82px]")}>O: 2331.41</span>
      <span className={clsx(cell, "w-[81px]")}>H: 2331.70</span>
      <span className={clsx(cell, "w-[78px]")}>L: 2330.82</span>
      <span className={clsx(cell, "w-[81px]")}>C: 2331.70</span>
      <span className={clsx(cell, "w-[78px]")}>V: 449</span>
      <span className={clsx(cell, "flex w-[155px] gap-1")}>
        <svg width="23" height="12" className="mt-0.5">
          <path d="M1 0v12M4 0v12M7 0v12M10 0v12M13 0v12M16 0v8M19 0v6M22 0v4" stroke="#5c7a1c" strokeWidth="2" />
          <path d="M16 8v4M19 6v6M22 5v7" stroke="#a03030" strokeWidth="2" />
        </svg>
        640/2 kb
      </span>
    </div>
  );
}

const MENUS = ["文件(F)", "显示(V)", "插入(I)", "图表(C)", "工具(T)", "窗口(W)", "帮助(H)"];

export default function App() {
  return (
    <div className={clsx("flex h-screen overflow-hidden bg-[#2f2f33] pt-px", UI)}>
      <div className="flex w-2 shrink-0 flex-col">
        <div className="h-[76px] bg-[#38383b]" />
        <div className="flex-1 bg-linear-to-r from-[#303034] from-40% to-[#0d2c74] to-60%" />
      </div>
      <div className="min-w-0 flex-1">
        <div className="flex h-full flex-col overflow-hidden rounded-tl-lg bg-[#f0f0f0]">
          <header className="flex h-[30px] shrink-0 items-center bg-linear-to-r from-[#f5f0f6] via-[#edf1fa] to-[#f3f0f8] pl-2">
            <svg width="16" height="16" viewBox="0 0 16 16">
              <path d="M0 0h16v16H0z" fill="#0b1450" />
              <path d="M2 11c4 3 10 1 12-4" stroke="#7fd3f0" strokeWidth="1.500" fill="none" />
              <path d="M3 9l3-3 2 2 4-5v5l-4 3-2-1-3 1z" fill="#fff" />
              <path d="M2 12c4 2 8 2 11-1" stroke="#38b24a" fill="none" />
            </svg>
            <h1 className="ml-1.5 font-['Roboto',sans-serif] text-[12px] leading-4 text-black">
              7178329: TradeMaxGlobal-Live7 - TradeMax Global Limited - [XAUUSD,M15 (visual)]
            </h1>
            <div className="ml-auto flex items-center gap-[35px] pr-2.5">
              <button type="button" aria-label="最小化" className="flex h-4 w-[11px] items-center"><i className="h-px w-full bg-black" /></button>
              <button type="button" aria-label="最大化" className="h-2.5 w-2.5 rounded-[1px] border border-black" />
              <button type="button" aria-label="关闭窗口">
                <svg width="11" height="11" viewBox="0 0 11 11"><path d="M.5.500l10 10M10.500.500l-10 10" stroke="#000" /></svg>
              </button>
            </div>
          </header>
          <nav className="flex h-[21px] shrink-0 items-center border-b border-[#9a9a9a] pl-[5px] text-[12px] leading-4 text-black">
            <svg width="15" height="15" viewBox="0 0 15 15" fill="none" className="mr-2">
              <rect x=".5" y=".5" width="10" height="9" fill="#fff" stroke="#6b9fc8" />
              <path d="M.5 2.500h10M2 5h5M2 7h3" stroke="#6b9fc8" />
              <rect x="4.500" y="5.500" width="10" height="9" fill="#fff" stroke="#4a86b8" />
              <path d="M4.500 7.500h10M6 12l2-3 1.500 4L11 9l2 3" stroke="#4a86b8" />
            </svg>
            <div className="flex gap-[19px]">
              {MENUS.map((m) => (
                <button key={m} type="button">{m}</button>
              ))}
            </div>
            <div className="ml-auto flex gap-[3px] overflow-hidden">
              <button type="button" aria-label="还原" className="flex size-4 items-end justify-center bg-white pb-1"><i className="h-0.5 w-1.5 bg-[#66707c]" /></button>
              <button type="button" aria-label="层叠" className="flex size-4 items-center justify-center bg-white">
                <svg width="9" height="9" viewBox="0 0 9 9" fill="none" stroke="#66707c">
                  <path d="M2.500 3V.500h6v5H6M.5 3.500h5.500v5H.500zM2.500 1h6M.5 4h5.500" />
                </svg>
              </button>
              <button type="button" aria-label="关闭图表" className="flex h-4 w-[10px] items-center justify-end bg-white text-[12px] leading-4 text-[#66707c]">×</button>
            </div>
          </nav>
          <main className="shrink-0">
            <Toolbar />
            <Charts />
            <ChartTabs />
            <Tester />
          </main>
          <StatusBar />
        </div>
      </div>
    </div>
  );
}
